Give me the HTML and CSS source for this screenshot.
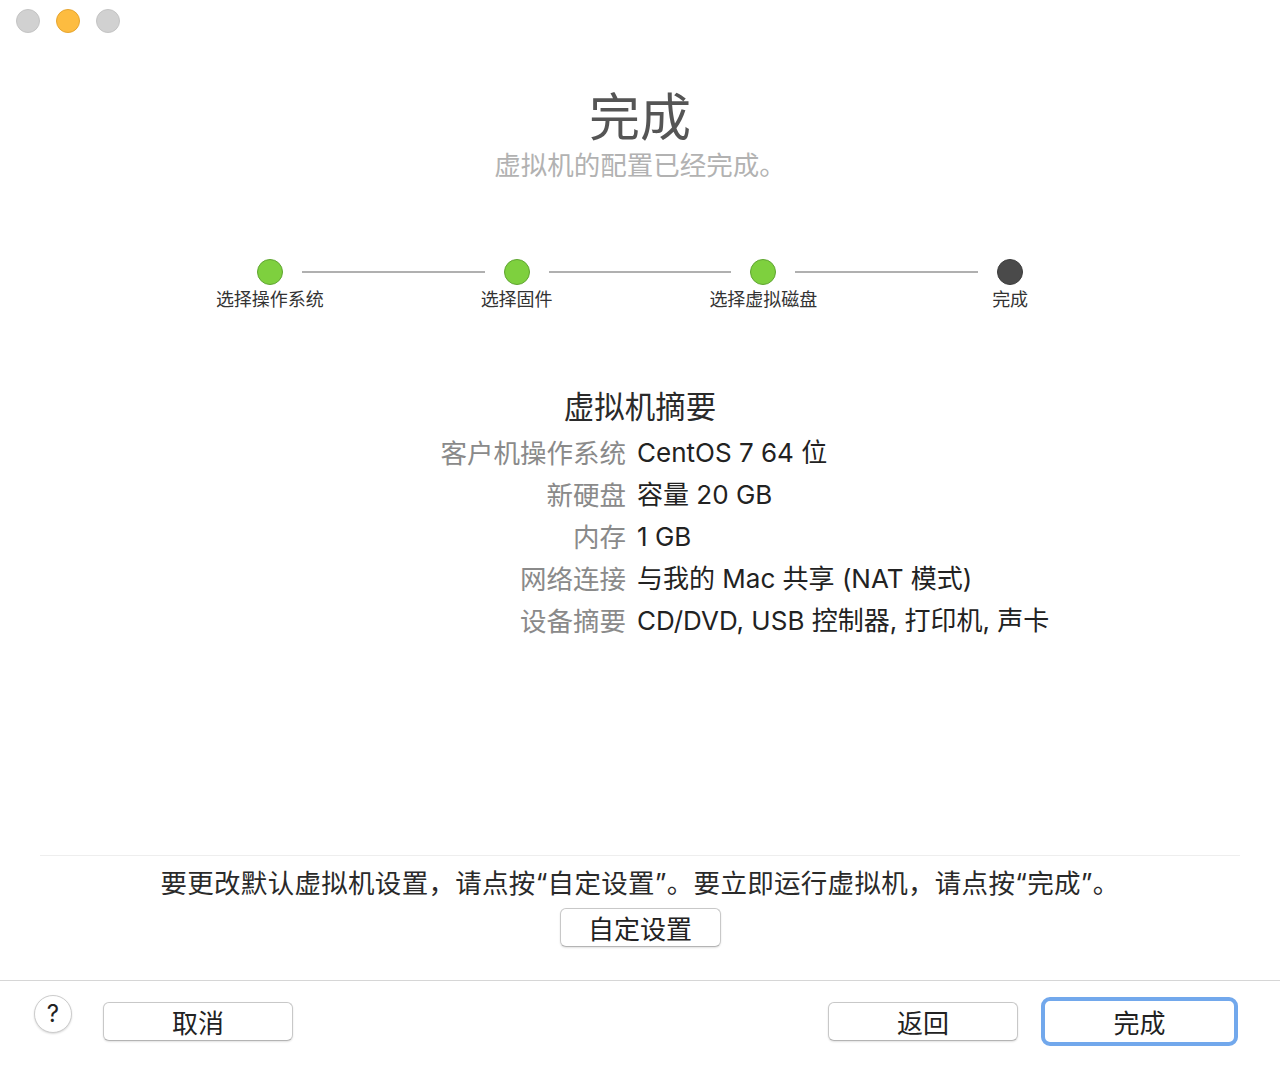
FILE: index.html
```html
<!DOCTYPE html>
<html lang="zh-CN">
<head>
  <meta charset="utf-8">
  <title>完成</title>
  <link rel="stylesheet" href="styles.css">
</head>
<body>
  <div class="window">
    <div class="titlebar">
      <span class="light grey"></span>
      <span class="light yellow"></span>
      <span class="light grey"></span>
    </div>

    <div class="header">
      <h1 class="title">完成</h1>
      <p class="subtitle">虚拟机的配置已经完成。</p>
    </div>

    <div class="stepper">
      <div class="track">
        <span class="dot done"></span>
        <span class="line"></span>
        <span class="dot done"></span>
        <span class="line"></span>
        <span class="dot done"></span>
        <span class="line"></span>
        <span class="dot current"></span>
      </div>
      <div class="labels">
        <span>选择操作系统</span>
        <span>选择固件</span>
        <span>选择虚拟磁盘</span>
        <span>完成</span>
      </div>
    </div>

    <div class="summary">
      <h2 class="summary-title">虚拟机摘要</h2>
      <div class="summary-grid">
        <span class="key">客户机操作系统</span><span class="val">CentOS 7 64 位</span>
        <span class="key">新硬盘</span><span class="val">容量 20 GB</span>
        <span class="key">内存</span><span class="val">1 GB</span>
        <span class="key">网络连接</span><span class="val">与我的 Mac 共享 (NAT 模式)</span>
        <span class="key">设备摘要</span><span class="val">CD/DVD, USB 控制器, 打印机, 声卡</span>
      </div>
    </div>

    <div class="spacer"></div>

    <div class="customize">
      <p class="hint">要更改默认虚拟机设置，请点按“自定设置”。要立即运行虚拟机，请点按“完成”。</p>
      <button class="btn btn-custom">自定设置</button>
    </div>

    <div class="footer">
      <button class="help">?</button>
      <button class="btn btn-wide">取消</button>
      <div class="footer-gap"></div>
      <button class="btn btn-wide">返回</button>
      <button class="btn btn-default">完成</button>
    </div>
  </div>
</body>
</html>
```

FILE: styles.css
```css
html, body {
  margin: 0;
  padding: 0;
  background-color: #ffffff;
}

body {
  font-family: Inter, "Noto Sans CJK SC", sans-serif;
  color: #222222;
}

.window {
  width: 1280px;
  height: 1066px;
  display: flex;
  flex-direction: column;
}

/* Title bar lights */
.titlebar {
  height: 42px;
  display: flex;
  align-items: center;
  gap: 16px;
  padding-left: 16px;
  box-sizing: border-box;
}

.light {
  width: 24px;
  height: 24px;
  border-radius: 50%;
  box-sizing: border-box;
}

.light.grey {
  background-color: #d1d1d1;
  border: 1px solid #c4c4c4;
}

.light.yellow {
  background-color: #fdbc40;
  border: 1px solid #e6a530;
}

/* Header */
.header {
  text-align: center;
  padding-top: 42px;
}

.title {
  margin: 0;
  font-family: "Noto Sans CJK SC", sans-serif;
  font-weight: 400;
  font-size: 51px;
  line-height: 60px;
  color: #555555;
}

.subtitle {
  margin: 4px 0 0;
  font-family: "Noto Sans CJK SC", sans-serif;
  font-size: 26.5px;
  line-height: 32px;
  color: #b2b2b2;
}

/* Steps */
.stepper {
  margin-top: 79px;
}

.track {
  display: grid;
  grid-template-columns: 26px 1fr 26px 1fr 26px 1fr 26px;
  column-gap: 19px;
  align-items: center;
  width: 766px;
  margin: 0 auto;
}

.dot {
  width: 26px;
  height: 26px;
  border-radius: 50%;
  box-sizing: border-box;
}

.dot.done {
  background-color: #7ed03e;
  border: 1px solid #5fa530;
}

.dot.current {
  background-color: #4a4a4a;
  border: 1px solid #3c3c3c;
}

.line {
  height: 2px;
  background-color: #b0b0b0;
}

.labels {
  display: grid;
  grid-template-columns: repeat(4, 1fr);
  width: 987px;
  margin: 2px auto 0;
  text-align: center;
  font-family: "Noto Sans CJK SC", sans-serif;
  font-size: 18px;
  line-height: 22px;
  color: #333333;
}

/* Summary */
.summary {
  margin-top: 76px;
}

.summary-title {
  margin: 0;
  text-align: center;
  font-family: "Noto Sans CJK SC", sans-serif;
  font-weight: 400;
  font-size: 30.5px;
  line-height: 40px;
  color: #2a2a2a;
}

.summary-grid {
  display: grid;
  grid-template-columns: 1fr 1fr;
  column-gap: 11px;
  padding-right: 17px;
  margin-top: 7px;
  font-size: 26px;
  line-height: 42px;
}

.key {
  text-align: right;
  font-size: 26.5px;
  color: #8a8a8a;
}

.val {
  color: #222222;
}

.spacer {
  flex: 1;
}

/* Customize */
.customize {
  margin: 0 40px;
  border-top: 1px solid #eeeeee;
  text-align: center;
  padding-top: 11px;
  padding-bottom: 33px;
}

.hint {
  margin: 0 0 9px;
  font-family: Inter, "Noto Sans CJK SC", sans-serif;
  font-size: 26.5px;
  letter-spacing: 0.3px;
  line-height: 32px;
  color: #2a2a2a;
}

.btn {
  font-family: "Noto Sans CJK SC", sans-serif;
  font-size: 26px;
  color: #222222;
  background-color: #ffffff;
  border: 1px solid #c8c8c8;
  border-bottom-color: #b4b4b4;
  border-radius: 6px;
  box-shadow: 0 1px 2px rgba(0, 0, 0, 0.12);
  height: 39px;
  padding: 0;
  line-height: 36px;
}

.btn-custom {
  width: 161px;
}

/* Footer */
.footer {
  border-top: 1px solid #d6d6d6;
  height: 86px;
  box-sizing: border-box;
  display: flex;
  align-items: flex-start;
  padding: 21px 42px 0 34px;
}

.help {
  width: 38px;
  height: 38px;
  border-radius: 50%;
  border: 1px solid #cccccc;
  background-color: #ffffff;
  box-shadow: 0 1px 2px rgba(0, 0, 0, 0.15);
  font-family: Inter, sans-serif;
  font-size: 24px;
  line-height: 34px;
  color: #222222;
  padding: 0;
  margin-top: -7px;
  margin-right: 31px;
}

.btn-wide {
  width: 190px;
}

.footer-gap {
  flex: 1;
}

.btn-default {
  width: 197px;
  height: 49px;
  margin-top: -5px;
  margin-left: 23px;
  border: 4px solid #72a8ec;
  border-radius: 9px;
  line-height: 40px;
  box-shadow: none;
}
```
